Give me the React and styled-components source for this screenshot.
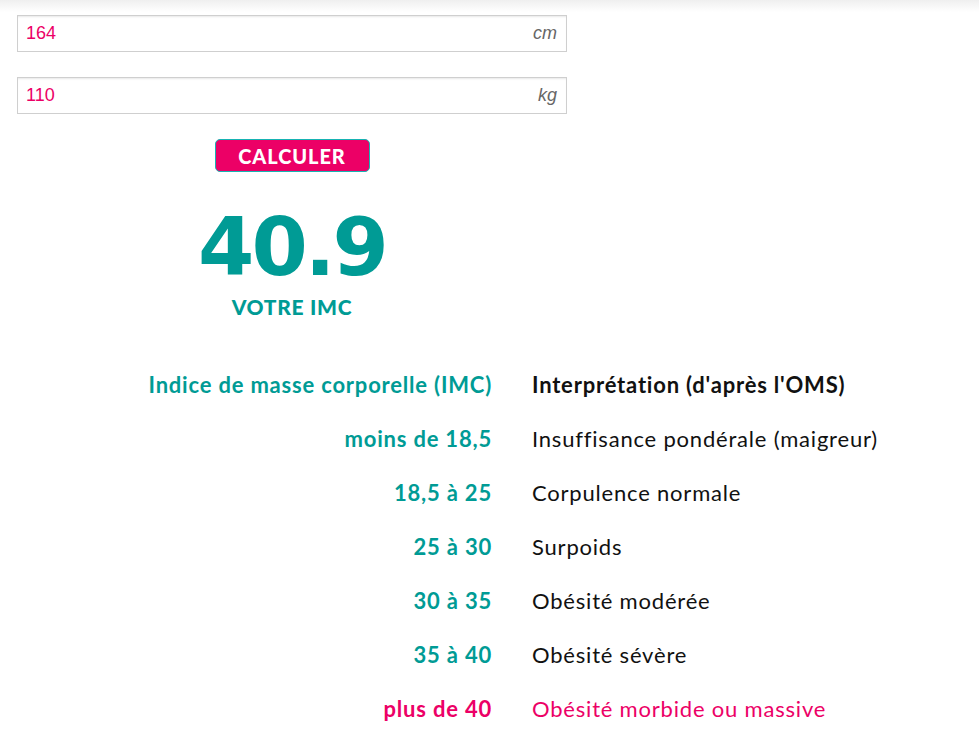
import React from 'react';
import styled, { createGlobalStyle } from 'styled-components';

const GlobalStyle = createGlobalStyle`
  body {
    margin: 0;
    background: #fff;
    font-family: "Lato", "Open Sans", sans-serif;
  }
`

const teal = '#009b95'
const pink = '#ec0066'

const Page = styled.div`
  width: 979px;
  min-height: 752px;
  box-sizing: border-box;
  padding: 15px 17px 0;
  background: linear-gradient(to bottom, #efefef 0px, #fff 12px);
`
const Form = styled.div`
  width: 550px;
  display: flex;
  flex-direction: column;
  align-items: center;
`
const Field = styled.label`
  width: 100%;
  height: 37px;
  box-sizing: border-box;
  border: 1px solid #cfcfcf;
  box-shadow: inset 0 2px 2px -1px #e8e8e8;
  display: flex;
  align-items: center;
  padding: 0 9px 0 8px;
  margin-bottom: 25px;
  font-family: "Liberation Sans", Arial, sans-serif;
  font-size: 18px;
`
const Value = styled.span`
  flex: 1;
  color: ${pink};
`
const Unit = styled.span`
  color: #666;
  font-style: italic;
`
const Button = styled.button`
  width: 155px;
  height: 33px;
  margin: 0;
  background: ${pink};
  border: 1px solid #17b3b3;
  border-radius: 5px;
  color: #fff;
  font-family: "Lato", sans-serif;
  font-weight: 900;
  font-size: 20px;
  letter-spacing: 0.9px;
  padding: 0;
`
const Score = styled.div`
  margin-top: 33px;
  color: ${teal};
  font-family: "DejaVu Sans", sans-serif;
  font-weight: bold;
  font-size: 81px;
  line-height: 84px;
  letter-spacing: -3px;
`
const ScoreLabel = styled.div`
  margin-top: 5px;
  color: ${teal};
  font-weight: 900;
  font-size: 21px;
  letter-spacing: 0.7px;
`
const Table = styled.div`
  margin-top: 38px;
  display: grid;
  grid-template-columns: 475px auto;
  grid-auto-rows: 54px;
  column-gap: 40px;
  align-items: center;
  font-size: 22px;
  letter-spacing: 0.8px;
`
const Range = styled.div`
  text-align: right;
  font-weight: bold;
  color: ${p => (p.$alert ? pink : teal)};
`
const Label = styled.div`
  font-weight: ${p => (p.$head ? 'bold' : 400)};
  color: ${p => (p.$alert ? pink : '#111')};
`

const rows = [
  ['moins de 18,5', 'Insuffisance pondérale (maigreur)'],
  ['18,5 à 25', 'Corpulence normale'],
  ['25 à 30', 'Surpoids'],
  ['30 à 35', 'Obésité modérée'],
  ['35 à 40', 'Obésité sévère'],
  ['plus de 40', 'Obésité morbide ou massive', true],
]

export default function App() {
  return (
    <Page>
      <GlobalStyle />
      <Form>
        <Field><Value>164</Value><Unit>cm</Unit></Field>
        <Field><Value>110</Value><Unit>kg</Unit></Field>
        <Button>CALCULER</Button>
        <Score>40.9</Score>
        <ScoreLabel>VOTRE IMC</ScoreLabel>
      </Form>
      <Table>
        <Range>Indice de masse corporelle (IMC)</Range>
        <Label $head>Interprétation (d'après l'OMS)</Label>
        {rows.map(([r, l, alert]) => (
          <React.Fragment key={r}>
            <Range $alert={alert}>{r}</Range>
            <Label $alert={alert}>{l}</Label>
          </React.Fragment>
        ))}
      </Table>
    </Page>
  );
}
